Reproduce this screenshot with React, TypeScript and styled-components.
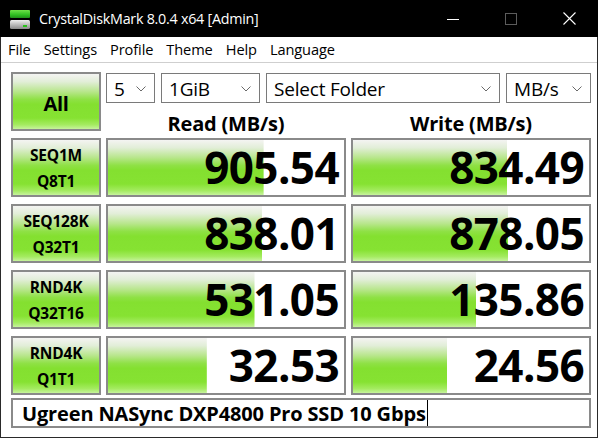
import React from 'react';
import styled, { createGlobalStyle } from 'styled-components';

const Global = createGlobalStyle`
  html, body { margin: 0; padding: 0; background: #ffffff; }
  body {
    width: 602px; height: 439px; overflow: hidden;
    font-family: "Open Sans", "Noto Sans", "DejaVu Sans", sans-serif;
    color: #000;
  }
`;

const GREEN = `linear-gradient(180deg, #f4f4f2 0%, #e2eed8 14%, #b8e68c 32%, #8fe146 46%, #84e030 55%, #86e232 80%, #a4eb60 92%, #c6f39c 100%)`;

const Window = styled.div`
  width: 598px;
  height: 438px;
  box-sizing: border-box;
  display: flex;
  flex-direction: column;
  border: 1px solid #2a2a2a;
  border-top: none;
  background: #fff;
`;

const TitleBar = styled.div`
  height: 37px;
  background: #000;
  display: flex;
  align-items: center;
  color: #fff;
  margin: 0 -1px;
`;

const AppIcon = styled.div`
  width: 22px;
  height: 22px;
  margin-left: 9px;
  margin-right: 8px;
  display: flex;
`;

const TitleText = styled.div`
  flex: 1;
  font-size: 14.3px;
  letter-spacing: -0.25px;
  line-height: 20px;
`;

const WinButton = styled.div`
  width: 58px;
  height: 37px;
  display: flex;
  align-items: center;
  justify-content: center;
`;

const MenuBar = styled.div`
  height: 25px;
  display: flex;
  align-items: center;
  padding-left: 0px;
  border-bottom: 1px solid #cfcfcf;
  font-size: 14.6px;
  letter-spacing: -0.1px;
`;

const MenuItem = styled.div`
  padding: 0 7px 0 7px;
  margin-right: -1px;
  line-height: 25px;
`;

const Body = styled.div`
  flex: 1;
  padding: 9px 5px 0 10px;
  display: flex;
  flex-direction: column;
`;

const Grid = styled.div`
  display: grid;
  grid-template-columns: 90px 240px 240px;
  grid-auto-rows: 59px;
  column-gap: 5px;
  row-gap: 7px;
`;

const GreenButton = styled.div`
  box-sizing: border-box;
  border: 2px solid #8a8a8a;
  background: ${GREEN};
  display: flex;
  flex-direction: column;
  align-items: center;
  justify-content: center;
  font-weight: 700;
`;

const AllButton = styled(GreenButton)`
  font-size: 20px;
  letter-spacing: -0.3px;
  padding-top: 3px;
`;

const TestLabel = styled(GreenButton)`
  font-size: 15.5px;
  line-height: 26px;
  letter-spacing: -0.2px;
`;

const Controls = styled.div`
  grid-column: 2 / span 2;
  display: flex;
  flex-direction: column;
`;

const SelectRow = styled.div`
  margin-top: 1px;
  height: 30px;
  display: flex;
  gap: 6px;
`;

const Select = styled.div<{ $w: number }>`
  box-sizing: border-box;
  width: ${p => p.$w}px;
  height: 30px;
  border: 1px solid #7a7a7a;
  background: #fff;
  display: flex;
  align-items: center;
  padding: 2px 8px 0 7px;
  font-size: 19px;
  letter-spacing: -0.2px;
`;

const SelectText = styled.span`
  flex: 1;
  line-height: 26px;
`;

const Headers = styled.div`
  display: grid;
  grid-template-columns: 240px 240px;
  column-gap: 5px;
  padding-top: 8px;
`;

const Header = styled.div`
  text-align: center;
  font-weight: 700;
  font-size: 20px;
  line-height: 26px;
  letter-spacing: -0.2px;
`;

const Result = styled.div`
  box-sizing: border-box;
  border: 2px solid #8a8a8a;
  background-color: #fff;
  background-image: ${GREEN};
  background-repeat: no-repeat;
  background-position: left top;
  display: flex;
  align-items: center;
  justify-content: flex-end;
  padding-right: 5px;
  font-weight: 700;
  font-size: 44px;
  letter-spacing: -0.6px;
  line-height: 55px;
`;

const NameBox = styled.div`
  margin-top: 3px;
  width: 580px;
  height: 30px;
  box-sizing: border-box;
  border: 2px solid #8a8a8a;
  display: flex;
  align-items: center;
  padding-left: 9px;
  font-weight: 700;
  font-size: 20px;
  letter-spacing: -0.15px;
`;

const Caret = styled.span`
  display: inline-block;
  width: 1px;
  height: 26px;
  background: #000;
  margin-left: 1px;
`;

const Chevron = () => (
  <svg width="10" height="6" viewBox="0 0 10 6">
    <path d="M0.5 0.5 L5 5 L9.5 0.5" fill="none" stroke="#6a6a6a" strokeWidth="1" />
  </svg>
);

const Logo = () => (
  <svg width="22" height="22" viewBox="0 0 22 22">
    <defs>
      <linearGradient id="lg" x1="0" y1="0" x2="0" y2="1">
        <stop offset="0" stopColor="#6fe24a" />
        <stop offset="0.6" stopColor="#2fc021" />
        <stop offset="1" stopColor="#1f8f18" />
      </linearGradient>
      <linearGradient id="lb" x1="0" y1="0" x2="0" y2="1">
        <stop offset="0" stopColor="#f0f0f0" />
        <stop offset="0.5" stopColor="#bdbdbd" />
        <stop offset="1" stopColor="#8a8a8a" />
      </linearGradient>
    </defs>
    <rect x="1" y="2" width="20" height="8" rx="1" fill="url(#lg)" />
    <rect x="1" y="12" width="20" height="9" rx="1.5" fill="url(#lb)" />
    <rect x="14" y="17" width="4" height="2" fill="#29c21b" />
  </svg>
);

const rows = [
  { a: 'SEQ1M', b: 'Q8T1', r: 905.54, w: 834.49 },
  { a: 'SEQ128K', b: 'Q32T1', r: 838.01, w: 878.05 },
  { a: 'RND4K', b: 'Q32T16', r: 531.05, w: 135.86 },
  { a: 'RND4K', b: 'Q1T1', r: 32.53, w: 24.56 },
];

const pct = (v: number) => Math.max(0, Math.min(100, ((Math.log10(v) + 1) / 6) * 100));

export default function App() {
  return (
    <>
      <Global />
      <Window>
        <TitleBar>
          <AppIcon><Logo /></AppIcon>
          <TitleText>CrystalDiskMark 8.0.4 x64 [Admin]</TitleText>
          <WinButton>
            <svg width="12" height="12" viewBox="0 0 12 12"><path d="M0 6.5 H12" stroke="#fff" strokeWidth="1" /></svg>
          </WinButton>
          <WinButton>
            <svg width="12" height="12" viewBox="0 0 12 12"><rect x="0.5" y="0.5" width="11" height="11" fill="none" stroke="#5c5c5c" strokeWidth="1" /></svg>
          </WinButton>
          <WinButton>
            <svg width="13" height="13" viewBox="0 0 13 13"><path d="M0.5 0.5 L12.5 12.5 M12.5 0.5 L0.5 12.5" stroke="#fff" strokeWidth="1.1" /></svg>
          </WinButton>
        </TitleBar>
        <MenuBar>
          {['File', 'Settings', 'Profile', 'Theme', 'Help', 'Language'].map(m => (
            <MenuItem key={m}>{m}</MenuItem>
          ))}
        </MenuBar>
        <Body>
          <Grid>
            <AllButton>All</AllButton>
            <Controls>
              <SelectRow>
                <Select $w={49}><SelectText>5</SelectText><Chevron /></Select>
                <Select $w={99}><SelectText>1GiB</SelectText><Chevron /></Select>
                <Select $w={234}><SelectText>Select Folder</SelectText><Chevron /></Select>
                <Select $w={85}><SelectText>MB/s</SelectText><Chevron /></Select>
              </SelectRow>
              <Headers>
                <Header>Read (MB/s)</Header>
                <Header>Write (MB/s)</Header>
              </Headers>
            </Controls>
            {rows.map((row, i) => (
              <React.Fragment key={i}>
                <TestLabel><span>{row.a}</span><span>{row.b}</span></TestLabel>
                <Result style={{ backgroundSize: `${pct(row.r)}% 100%` }}>{row.r.toFixed(2)}</Result>
                <Result style={{ backgroundSize: `${pct(row.w)}% 100%` }}>{row.w.toFixed(2)}</Result>
              </React.Fragment>
            ))}
          </Grid>
          <NameBox>Ugreen NASync DXP4800 Pro SSD 10 Gbps<Caret /></NameBox>
        </Body>
      </Window>
    </>
  );
}
